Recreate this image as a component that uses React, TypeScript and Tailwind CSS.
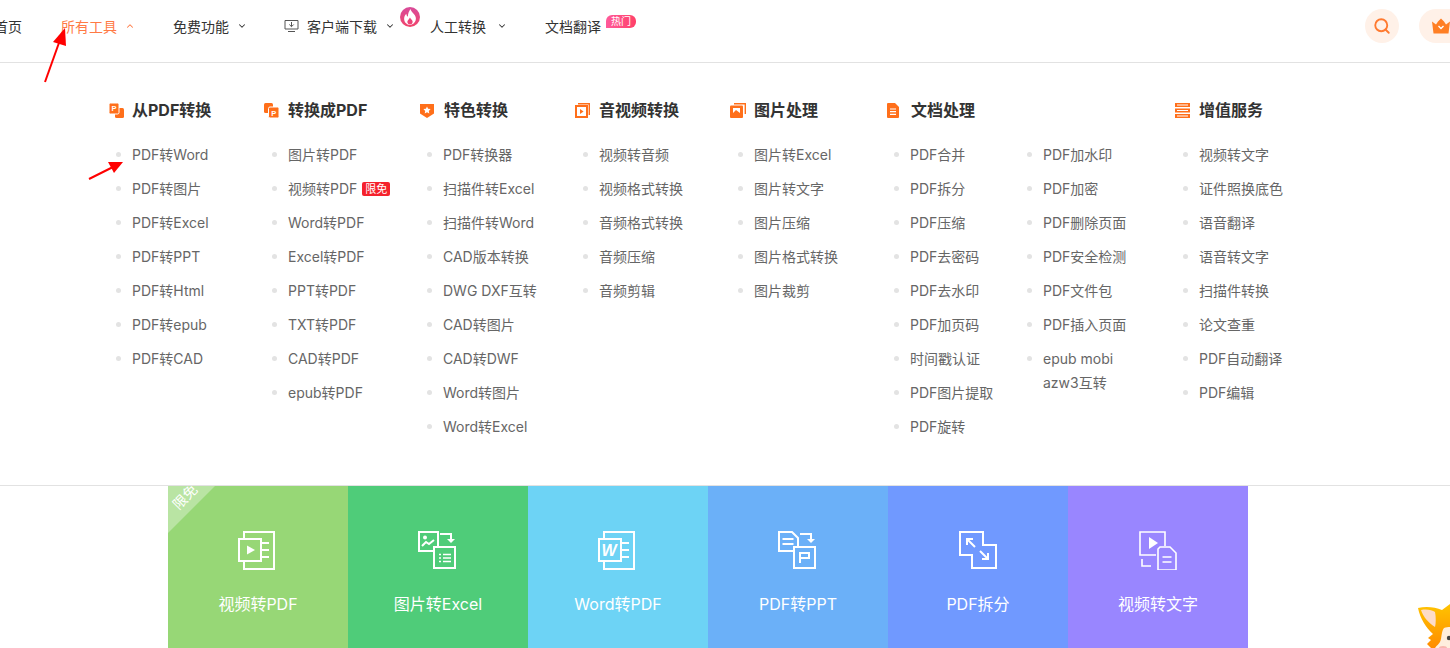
import { ChevronDown, ChevronUp, Search } from "lucide-react";

const font = "font-['Inter','Noto_Sans_CJK_SC',sans-serif]";

function HeadIcon({ kind }: { kind: string }) {
  const c = "#ff6f1a";
  if (kind === "from")
    return (
      <svg width="15" height="15" viewBox="0 0 15 15" className="ml-[1px]">
        <rect x="6" y="5" width="9" height="10" rx="1.5" fill={c} />
        <rect x="0" y="0" width="10" height="11" rx="1.5" fill={c} stroke="#fff" strokeWidth="1" />
        <text x="2.6" y="8.4" fontSize="7.5" fontWeight="700" fill="#fff" fontFamily="Liberation Sans">P</text>
      </svg>
    );
  if (kind === "to")
    return (
      <svg width="15" height="15" viewBox="0 0 15 15">
        <rect x="0" y="0" width="9" height="10" rx="1.5" fill={c} />
        <rect x="4.5" y="4" width="10.5" height="11" rx="1.5" fill={c} stroke="#fff" strokeWidth="1" />
        <text x="7.2" y="12.6" fontSize="7.5" fontWeight="700" fill="#fff" fontFamily="Liberation Sans">P</text>
      </svg>
    );
  if (kind === "special")
    return (
      <svg width="14" height="15" viewBox="0 0 14 15">
        <path d="M0 1h14v9.5L7 15 0 10.5z" fill={c} />
        <path d="M7 3.500l1.100 2.300 2.500.3-1.800 1.800.5 2.500L7 9.200l-2.300 1.200.5-2.500-1.800-1.800 2.500-.3z" fill="#fff" />
      </svg>
    );
  if (kind === "video")
    return (
      <svg width="15" height="15" viewBox="0 0 15 15" fill="none">
        <path d="M3 .7h11.3V12" stroke={c} strokeWidth="1.4" />
        <rect x="1" y="3" width="11" height="11" stroke={c} strokeWidth="2" />
        <path d="M5 6l3.600 2.500L5 11z" fill={c} />
      </svg>
    );
  if (kind === "image")
    return (
      <svg width="16" height="15" viewBox="0 0 16 15" fill="none">
        <path d="M4 .7h11.300V11" stroke={c} strokeWidth="1.4" />
        <rect x="0" y="2.500" width="13" height="12.500" rx="1" fill={c} />
        <path d="M3 10l3-3 4 3V5H3z" fill="#fff" />
      </svg>
    );
  if (kind === "doc")
    return (
      <svg width="12" height="15" viewBox="0 0 12 15">
        <path d="M1 0h7l4 4v10a1 1 0 0 1-1 1H1a1 1 0 0 1-1-1V1a1 1 0 0 1 1-1z" fill={c} />
        <path d="M3 6h6M3 8.700h6M3 11.400h6" stroke="#fff" strokeWidth="1.2" />
      </svg>
    );
  return (
    <svg width="15" height="15" viewBox="0 0 15 15">
      <path d="M0 0h15v4H0zM0 5.500h15v4H0zM0 11h15v4H0z" fill={c} />
      <path d="M2 2h11M2 7.500h11M2 13h11" stroke="#fff" strokeWidth="1" />
    </svg>
  );
}

function Item({ label, badge }: { label: string; badge?: boolean }) {
  return (
    <li className="flex items-start py-[5px] text-sm leading-6 text-[#666]">
      <span className="mt-[9px] mr-[11px] h-[5px] w-[5px] shrink-0 rounded-full bg-[#e3e3e3]" />
      <span>{label}</span>
      {badge && (
        <span className="mt-[5px] ml-[5px] h-[14px] rounded-[2px] bg-[#f5222d] px-[3px] text-[11px] leading-[14px] whitespace-nowrap text-white">
          限免
        </span>
      )}
    </li>
  );
}

const columns = [
  { w: "w-[156px]", pl: "pl-2", kind: "from", title: "从PDF转换", items: ["PDF转Word", "PDF转图片", "PDF转Excel", "PDF转PPT", "PDF转Html", "PDF转epub", "PDF转CAD"] },
  { w: "w-[156px]", pl: "pl-2", kind: "to", title: "转换成PDF", items: ["图片转PDF", "视频转PDF", "Word转PDF", "Excel转PDF", "PPT转PDF", "TXT转PDF", "CAD转PDF", "epub转PDF"] },
  { w: "w-[155px]", pl: "pl-[7px]", kind: "special", title: "特色转换", items: ["PDF转换器", "扫描件转Excel", "扫描件转Word", "CAD版本转换", "DWG DXF互转", "CAD转图片", "CAD转DWF", "Word转图片", "Word转Excel"] },
  { w: "w-[155px]", pl: "pl-2", kind: "video", title: "音视频转换", items: ["视频转音频", "视频格式转换", "音频格式转换", "音频压缩", "音频剪辑"] },
  { w: "w-[157px]", pl: "pl-2", kind: "image", title: "图片处理", items: ["图片转Excel", "图片转文字", "图片压缩", "图片格式转换", "图片裁剪"] },
];

const docA = ["PDF合并", "PDF拆分", "PDF压缩", "PDF去密码", "PDF去水印", "PDF加页码", "时间戳认证", "PDF图片提取", "PDF旋转"];
const docB = ["PDF加水印", "PDF加密", "PDF删除页面", "PDF安全检测", "PDF文件包", "PDF插入页面", "epub mobi azw3互转"];
const extra = ["视频转文字", "证件照换底色", "语音翻译", "语音转文字", "扫描件转换", "论文查重", "PDF自动翻译", "PDF编辑"];

function Heading({ kind, title }: { kind: string; title: string }) {
  return (
    <div className="mb-4 flex h-6 items-center text-base font-bold text-[#333]">
      <span className="flex w-[24px] shrink-0 items-center">
        <HeadIcon kind={kind} />
      </span>
      {title}
    </div>
  );
}

function TileIcon({ kind }: { kind: string }) {
  const p = { fill: "none", stroke: "#fff", strokeWidth: 2 };
  const arrow = (
    <>
      <path d="M22 4h11v6" {...p} />
      <path d="M29 9h8l-4 4z" fill="#fff" />
    </>
  );
  const box = kind === "video" || kind === "word" ? "1 0 40 40" : "0 0 40 40";
  return (
    <svg width="40" height="40" viewBox={box}>
      {kind === "video" && (
        <>
          <path d="M7 8V2h30v37H7v-7" {...p} />
          <rect x="2" y="9" width="22" height="22" {...p} />
          <path d="M24 13h8M24 20h8M24 27h8" {...p} />
          <path d="M10 15.500l8 4.500-8 4.500z" fill="#fff" />
        </>
      )}
      {kind === "word" && (
        <>
          <path d="M7 8V2h30v37H7v-7" {...p} />
          <rect x="2" y="9" width="22" height="22" {...p} />
          <path d="M24 13h8M24 20h8M24 27h8" {...p} />
          <text x="4.500" y="26" fontSize="16" fontWeight="700" fontStyle="italic" fill="#fff" fontFamily="Liberation Sans">W</text>
        </>
      )}
      {kind === "excel" && (
        <>
          <path d="M16 21H1V2h19v14" {...p} />
          <rect x="16" y="17" width="21" height="21" {...p} />
          <circle cx="7" cy="7.500" r="2" fill="#fff" />
          <path d="M4 16l4-4 3 2 5-4" {...p} />
          {arrow}
          <path d="M21 24.500h2M25 24.500h8M21 28h2M25 28h8M21 31.500h2M25 31.500h8" fill="none" stroke="#fff" strokeWidth="1.6" />
        </>
      )}
      {kind === "ppt" && (
        <>
          <path d="M15 21H1V2h13l6 6v9" {...p} />
          <path d="M4.500 9h11M4.500 14h11" {...p} />
          <rect x="16" y="17" width="21" height="21" {...p} />
          <path d="M22 33V23h9v5h-9" {...p} />
          {arrow}
        </>
      )}
      {kind === "split" && (
        <>
          <path d="M2 2h23v13h13v23H14V25H2z" {...p} />
          <path d="M17 17L10 10M9 15V9h6M22 21l7 7M30 23v6h-6" {...p} />
        </>
      )}
      {kind === "text" && (
        <>
          <path d="M18 25H2V2h25v14" {...p} strokeWidth={1.6} />
          <path d="M11 7l9 6-9 6z" fill="#fff" />
          <path d="M22 17h10l6 6v17H20V19z" {...p} strokeWidth={1.6} />
          <path d="M24.500 27h9M24.500 32h9" {...p} strokeWidth={1.6} />
          <path d="M4 29v7h9" {...p} strokeWidth={1.6} />
        </>
      )}
    </svg>
  );
}

const tiles = [
  { bg: "bg-[#97d776]", kind: "video", label: "视频转PDF", ribbon: true },
  { bg: "bg-[#4fcc79]", kind: "excel", label: "图片转Excel" },
  { bg: "bg-[#6dd3f5]", kind: "word", label: "Word转PDF" },
  { bg: "bg-[#6bb0f8]", kind: "ppt", label: "PDF转PPT" },
  { bg: "bg-[#7099ff]", kind: "split", label: "PDF拆分" },
  { bg: "bg-[#9986ff]", kind: "text", label: "视频转文字" },
];

export default function App() {
  return (
    <div className={`relative h-[648px] w-[1450px] overflow-hidden bg-white ${font}`}>
      {/* top nav */}
      <header className="flex h-[63px] items-center border-b border-[#e2e2e2] pb-[10px] text-[14px] text-[#333]">
        <span className="-ml-[6px]">首页</span>
        <span className="ml-[39px] flex items-center text-[#ff7a45]">
          所有工具
          <ChevronUp className="ml-[8px] h-[10px] w-[10px]" strokeWidth={2.5} />
        </span>
        <span className="ml-[38px] flex items-center">
          免费功能
          <ChevronDown className="ml-[8px] h-[10px] w-[10px]" strokeWidth={2.5} />
        </span>
        <span className="ml-[37px] flex items-center">
          <svg width="15" height="14" viewBox="0 0 15 14" fill="none" stroke="#555" strokeWidth="1" className="mr-[8px]">
            <path d="M1 1.500h13v8.500H1zM7.500 3v4.500M5.300 5.500l2.200 2.200 2.200-2.200M4 12.500h7" />
          </svg>
          客户端下载
          <ChevronDown className="ml-[8px] h-[10px] w-[10px]" strokeWidth={2.5} />
        </span>
        <span className="relative ml-[35px] flex items-center">
          <span className="absolute -top-[9px] -left-[30px] flex h-[20px] w-[20px] items-center justify-center rounded-full bg-linear-to-b from-[#d84a9a] to-[#f2436a]">
            <svg width="14" height="16" viewBox="0 0 13 15">
              <path d="M7 0c.5 3 4.500 4.500 5 8.500C12.300 12 9.500 15 6.500 15S.8 12.500 1 9c.1-2 1-3.500 2-4.500.2 1.500.8 2.300 1.500 2.700C4.500 4.500 5.500 2 7 0z" fill="#fff" />
              <path d="M6.500 8c.3 1.500 2.500 2 2.500 4 0 1.500-1 2.500-2.500 2.500S4 13.500 4 12c0-1.500 2-2.500 2.500-4z" fill="#ec4378" />
            </svg>
          </span>
          人工转换
          <ChevronDown className="ml-[11px] h-[10px] w-[10px]" strokeWidth={2.5} />
        </span>
        <span className="relative ml-[38px]">
          文档翻译
          <span className="absolute -top-[1px] left-[61px] h-[13px] w-[30px] rounded-t-md rounded-br-md bg-linear-to-r from-[#ff5a9a] to-[#ff4068] text-center text-[10px] leading-[13px] text-white">
            热门
          </span>
        </span>
        <span className="ml-auto flex h-[34px] w-[34px] items-center justify-center rounded-full bg-[#fff1e8]">
          <Search className="h-[18px] w-[18px] text-[#ff7a30]" strokeWidth={2.5} />
        </span>
        <span className="-mr-[20px] ml-[20px] flex h-[34px] w-[51px] items-center rounded-full bg-[#fff1e8] pl-[13px]">
          <svg width="18" height="16" viewBox="0 0 18 15">
            <path d="M0 3l4 3 2-3 3-3 3 3 2 3 4-3-1.500 12h-15z" fill="#ff7f24" />
            <path d="M6.500 7.500L9 10l2.500-2.500" fill="none" stroke="#fff" strokeWidth="1.400" />
          </svg>
        </span>
      </header>

      {/* menu */}
      <section className="flex h-[423px] border-b border-[#e2e2e2] pt-[35px] pl-[108px]">
        {columns.map((col) => (
          <div key={col.title} className={col.w}>
            <Heading kind={col.kind} title={col.title} />
            <ul className={col.pl}>
              {col.items.map((it) => (
                <Item key={it} label={it} badge={col.title === "转换成PDF" && it === "视频转PDF"} />
              ))}
            </ul>
          </div>
        ))}
        <div className="w-[288px]">
          <Heading kind="doc" title="文档处理" />
          <div className="flex pl-[7px]">
            <ul className="w-[133px]">
              {docA.map((it) => <Item key={it} label={it} />)}
            </ul>
            <ul className="w-[120px]">
              {docB.map((it) => <Item key={it} label={it} />)}
            </ul>
          </div>
        </div>
        <div className="w-[156px]">
          <Heading kind="extra" title="增值服务" />
          <ul className="pl-2">
            {extra.map((it) => <Item key={it} label={it} />)}
          </ul>
        </div>
      </section>

      {/* quick tools */}
      <section className="ml-[168px] flex">
        {tiles.map((t) => (
          <div key={t.label} className={`relative flex h-[162px] w-[180px] flex-col items-center overflow-hidden pt-[44px] text-white ${t.bg}`}>
            {t.ribbon && (
              <>
                <div className="absolute top-0 left-0 h-0 w-0 border-t-[47px] border-r-[47px] border-t-[#b9e4a3] border-r-transparent" />
                <span className="absolute top-[1px] left-[3px] -rotate-45 text-sm">限免</span>
              </>
            )}
            <TileIcon kind={t.kind} />
            <span className="mt-[22px] text-base leading-6">{t.label}</span>
          </div>
        ))}
      </section>

      {/* annotation arrows */}
      <svg className="absolute top-0 left-0" width="140" height="190" viewBox="0 0 140 190">
        <path d="M45 82L60 40" stroke="#f00" strokeWidth="2" />
        <path d="M65 28L53 42l13 4z" fill="#f00" />
        <path d="M89 179l24-12" stroke="#f00" strokeWidth="2" />
        <path d="M123 162l-15 0 6 11z" fill="#f00" />
      </svg>

      {/* mascot */}
      <svg className="absolute top-[602px] left-[1417px]" width="33" height="46" viewBox="0 0 33 46">
        <defs>
          <linearGradient id="fur" x1="0" y1="0" x2="0" y2="1">
            <stop offset="0" stopColor="#ffc400" />
            <stop offset="1" stopColor="#ff8c00" />
          </linearGradient>
        </defs>
        <path d="M1 6c8-2 17-1 24 2l8-6v44H14l-4-4 4-4-3-2 5-4C9 26 3 16 1 6z" fill="url(#fur)" />
        <path d="M4 8c6-1 11 0 14 2 1 5 1 11 0 15C12 21 6 15 4 8z" fill="#fddcc8" />
        <path d="M27 26c2-1 4-1 6-1v21H18c2-3 4-4 5-6 2-4 1-10 4-14z" fill="#ffeedd" />
        <circle cx="32" cy="36" r="2.200" fill="#444" />
        <ellipse cx="26" cy="46" rx="4" ry="2" fill="#f9b7b0" />
      </svg>
    </div>
  );
}
